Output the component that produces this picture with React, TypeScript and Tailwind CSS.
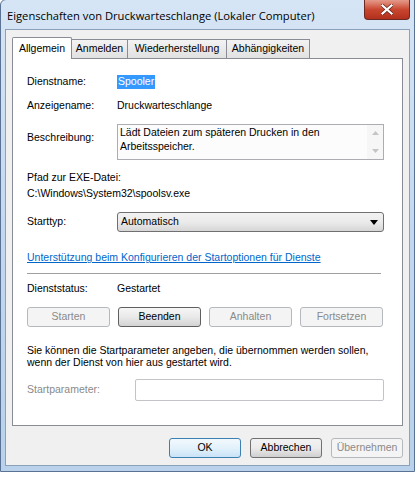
const dlg = "font-['Liberation_Sans',Arial,sans-serif] text-[10.5px] text-black";

const PanelButton = ({ label, disabled, focused }: { label: string; disabled?: boolean; focused?: boolean }) => (
  <div
    className={`w-[83px] h-[20px] rounded-[3px] border flex items-center justify-center ${
      disabled
        ? 'border-[#b5b9bd] bg-[#f4f4f4] text-[#8a8a8a]'
        : focused
        ? 'border-[#5f5f5f] bg-gradient-to-b from-[#f6f6f6] via-[#e9e9e9] to-[#d3d3d3] text-black'
        : 'border-[#707070] bg-gradient-to-b from-[#f2f2f2] via-[#ebebeb] to-[#cfcfcf] text-black'
    }`}
  >
    {label}
  </div>
);

export default function App() {
  return (
    <div className="w-[419px] h-[479px] bg-white overflow-hidden">
      <div className="w-[415px] h-[473px] -mt-px rounded-tl-[6px] border border-[#5a7394] bg-gradient-to-b from-[#d6e5f5] via-[#c3d8ef] to-[#b9d1ea] flex flex-col">
        {/* title bar */}
        <div className="h-[29px] flex items-start justify-between">
          <div className="pl-[6px] pt-[9px] font-['Open_Sans',sans-serif] text-[11.2px] text-black leading-[14px]">
            Eigenschaften von Druckwarteschlange (Lokaler Computer)
          </div>
          <div className="mr-[4px] w-[46px] h-[20px] rounded-b-[4px] border border-t-0 border-[#6a2a22] bg-gradient-to-b from-[#e49a8b] via-[#c9462f] to-[#b32f1e] flex items-center justify-center">
            <svg width="12" height="11" viewBox="0 0 12 11">
              <path d="M1.5 1.5 L10.5 9.5 M10.5 1.5 L1.5 9.5" stroke="#5a1e16" strokeWidth="3.6" strokeLinecap="square" />
              <path d="M1.5 1.5 L10.5 9.5 M10.5 1.5 L1.5 9.5" stroke="#ffffff" strokeWidth="2.2" strokeLinecap="square" />
            </svg>
          </div>
        </div>

        {/* client area */}
        <div className={`mx-[4px] flex-1 mb-[5px] border border-[#8aa0bb] bg-[#f0f0f0] flex flex-col px-[6px] pt-[7px] ${dlg}`}>
          <div className="flex items-end">
            <div className="w-[60px] h-[22px] -mb-px relative z-10 bg-white border border-b-0 border-[#898c95] flex items-center justify-center rounded-t-[2px]">
              Allgemein
            </div>
            <div className="w-[56px] h-[19px] bg-gradient-to-b from-[#f3f3f3] to-[#e1e1e1] border border-l-0 border-b-0 border-[#898c95] flex items-center justify-center">
              Anmelden
            </div>
            <div className="w-[99px] h-[19px] bg-gradient-to-b from-[#f3f3f3] to-[#e1e1e1] border border-l-0 border-b-0 border-[#898c95] flex items-center justify-center">
              Wiederherstellung
            </div>
            <div className="w-[83px] h-[19px] bg-gradient-to-b from-[#f3f3f3] to-[#e1e1e1] border border-l-0 border-b-0 border-[#898c95] flex items-center justify-center">
              Abhängigkeiten
            </div>
          </div>

          <div className="h-[368px] bg-white border border-[#898c95] flex flex-col pl-[14px] pr-[18px]">
            <div className="h-[15px]" />
            <div className="h-[16px] flex items-center">
              <div className="w-[90px]">Dienstname:</div>
              <div className="bg-[#3399ff] text-white px-px h-[14px] flex items-center">Spooler</div>
            </div>
            <div className="h-[8px]" />
            <div className="h-[16px] flex items-center">
              <div className="w-[90px]">Anzeigename:</div>
              <div>Druckwarteschlange</div>
            </div>
            <div className="h-[10px]" />
            <div className="h-[36px] flex items-start">
              <div className="w-[90px] mt-[6px]">Beschreibung:</div>
              <div className="flex-1 h-[36px] border border-[#abadb3] bg-[#fcfcfc] flex">
                <div className="flex-1 pl-[2px] pt-px leading-[13.5px]">
                  Lädt Dateien zum späteren Drucken in den
                  <br />
                  Arbeitsspeicher.
                </div>
                <div className="w-[16px] bg-[#f6f6f6] flex flex-col items-center justify-between py-[6px]">
                  <svg width="7" height="4" viewBox="0 0 7 4"><path d="M0 4 L3.5 0 L7 4 Z" fill="#c4c4c4" /></svg>
                  <svg width="7" height="4" viewBox="0 0 7 4"><path d="M0 0 L3.5 4 L7 0 Z" fill="#c4c4c4" /></svg>
                </div>
              </div>
            </div>
            <div className="h-[11px]" />
            <div className="h-[14px] flex items-center">Pfad zur EXE-Datei:</div>
            <div className="h-[2px]" />
            <div className="h-[14px] flex items-center">C:\Windows\System32\spoolsv.exe</div>
            <div className="h-[11px]" />
            <div className="h-[20px] flex items-center">
              <div className="w-[90px]">Starttyp:</div>
              <div className="flex-1 h-[20px] rounded-[3px] border border-[#707070] bg-gradient-to-b from-[#f2f2f2] via-[#ebebeb] to-[#d6d6d6] flex items-center justify-between pl-[3px] pr-[5px]">
                <span>Automatisch</span>
                <svg width="8" height="5" viewBox="0 0 8 5"><path d="M0 0 L8 0 L4 5 Z" fill="#000" /></svg>
              </div>
            </div>
            <div className="h-[19px]" />
            <div className="h-[14px] flex items-center">
              <span className="text-[#0066cc] underline">Unterstützung beim Konfigurieren der Startoptionen für Dienste</span>
            </div>
            <div className="h-[8px]" />
            <div className="h-px bg-[#a0a0a0] mr-[3px]" />
            <div className="h-[8px]" />
            <div className="h-[14px] flex items-center">
              <div className="w-[90px]">Dienststatus:</div>
              <div>Gestartet</div>
            </div>
            <div className="h-[11px]" />
            <div className="flex gap-[8px]">
              <PanelButton label="Starten" disabled />
              <PanelButton label="Beenden" focused />
              <PanelButton label="Anhalten" disabled />
              <PanelButton label="Fortsetzen" disabled />
            </div>
            <div className="h-[17px]" />
            <div className="leading-[12px]">
              Sie können die Startparameter angeben, die übernommen werden sollen,
              <br />
              wenn der Dienst von hier aus gestartet wird.
            </div>
            <div className="h-[11px]" />
            <div className="h-[22px] flex items-center">
              <div className="w-[108px] text-[#8a8a8a]">Startparameter:</div>
              <div className="flex-1 h-[22px] border border-[#c2c4c8] rounded-[2px] bg-white" />
            </div>
          </div>

          <div className="flex justify-end gap-[9px] mt-[12px]">
            <div className="w-[72px] h-[20px] rounded-[3px] border border-[#3c7fb1] bg-gradient-to-b from-[#f2f9fd] via-[#e3f1fb] to-[#c9e3f6] flex items-center justify-center">
              OK
            </div>
            <div className="w-[72px] h-[20px] rounded-[3px] border border-[#707070] bg-gradient-to-b from-[#f2f2f2] via-[#ebebeb] to-[#cfcfcf] flex items-center justify-center">
              Abbrechen
            </div>
            <div className="w-[72px] h-[20px] rounded-[3px] border border-[#b5b9bd] bg-[#f4f4f4] text-[#8a8a8a] flex items-center justify-center">
              Übernehmen
            </div>
          </div>
        </div>
      </div>
    </div>
  );
}
